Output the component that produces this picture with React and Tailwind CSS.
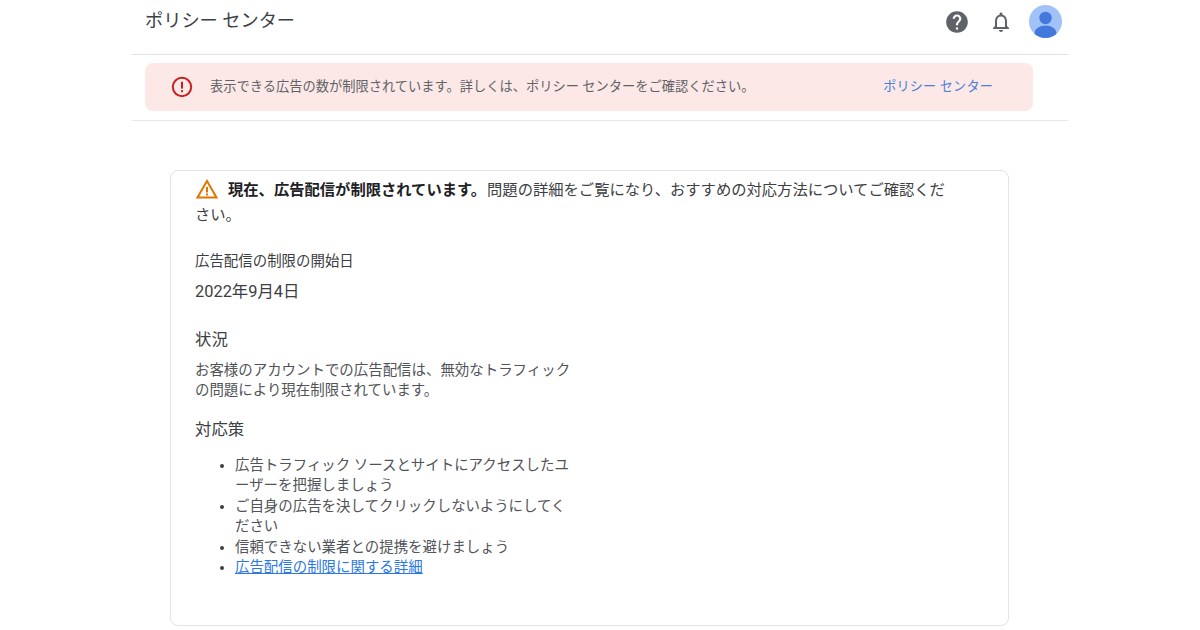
import React from "react";

function App() {
  return (
    <div className="w-[1200px] h-[630px] overflow-hidden bg-white text-[#3c4043] font-['Roboto','Noto_Sans_CJK_JP',sans-serif]">
      <div className="mx-auto w-[936px]">
        <header className="h-[55px] border-b border-[#e2e3e8] flex items-start justify-between pl-[13px] pr-[6px]">
          <h1 className="text-[18.2px] leading-[24px] mt-[9px] font-normal text-[#3c4043]">ポリシー センター</h1>
          <div className="flex items-center mt-[5px]">
            <svg width="26" height="26" viewBox="0 0 24 24" className="mr-[19px]">
              <path fill="#5f6368" d="M12 2C6.48 2 2 6.48 2 12s4.48 10 10 10 10-4.48 10-10S17.52 2 12 2zm1 17h-2v-2h2v2zm2.07-7.75l-.9.92C13.45 12.9 13 13.5 13 15h-2v-.5c0-1.1.45-2.1 1.17-2.83l1.24-1.26c.37-.36.59-.86.59-1.41 0-1.1-.9-2-2-2s-2 .9-2 2H8c0-2.21 1.79-4 4-4s4 1.79 4 4c0 .88-.36 1.68-.93 2.25z" />
            </svg>
            <svg width="24" height="24" viewBox="0 0 24 24" className="mr-[16px]">
              <path fill="#5f6368" d="M12 22c1.1 0 2-.9 2-2h-4c0 1.1.9 2 2 2zm6-6v-5c0-3.07-1.63-5.64-4.5-6.32V4c0-.83-.67-1.5-1.5-1.5s-1.5.67-1.5 1.5v.68C7.64 5.36 6 7.92 6 11v5l-2 2v1h16v-1l-2-2zm-2 1H8v-6c0-2.48 1.51-4.5 4-4.5s4 2.02 4 4.5v6z" />
            </svg>
            <svg width="33" height="33" viewBox="0 0 33 33">
              <defs>
                <clipPath id="avatar"><circle cx="16.5" cy="16.5" r="16.5" /></clipPath>
              </defs>
              <g clipPath="url(#avatar)">
                <rect width="33" height="33" fill="#a0c2f9" />
                <circle cx="16.5" cy="13" r="6.2" fill="#4378dc" />
                <ellipse cx="16.5" cy="28" rx="11" ry="7.5" fill="#4378dc" />
              </g>
            </svg>
          </div>
        </header>

        <div className="pt-[8px] pb-[9px] pl-[13px] pr-[35px] border-b border-[#e8e9ec]">
          <div className="h-[48px] rounded-[8px] bg-[#fce8e6] flex items-center pl-[25px] pr-[40px]">
            <svg width="24" height="24" viewBox="0 0 24 24" className="shrink-0 mr-[16px]">
              <circle cx="12" cy="12" r="9.2" fill="none" stroke="#c5221f" strokeWidth="2" />
              <rect x="11" y="6.8" width="2" height="6.8" fill="#c5221f" />
              <rect x="11" y="15.2" width="2" height="2" fill="#c5221f" />
            </svg>
            <p className="flex-1 text-[13.25px] leading-[20px] text-[#5f6368] -mt-[1px]">表示できる広告の数が制限されています。詳しくは、ポリシー センターをご確認ください。</p>
            <a className="text-[13.1px] leading-[20px] tracking-[0.2px] text-[#4a80d8]">ポリシー センター</a>
          </div>
        </div>

        <main className="mt-[49px] ml-[38px] w-[839px] h-[456px] rounded-[8px] border border-[#e2e3e8] pl-[24px] pt-[6px]">
          <p className="w-[755px] text-[15.3px] leading-[25px] text-[#3c4043]">
            <svg width="24" height="24" viewBox="0 0 24 24" className="inline-block align-[-6px] mr-[9px]">
              <path fill="none" stroke="#e37400" strokeWidth="2" strokeLinejoin="miter" d="M12 4 L21.5 20.5 H2.5 Z" />
              <rect x="11" y="10" width="2" height="5.5" fill="#e37400" />
              <rect x="11" y="16.5" width="2" height="2" fill="#e37400" />
            </svg>
            <strong className="font-bold text-[#202124] mr-[1px]">現在、広告配信が制限されています。</strong><span>問題の詳細をご覧になり、おすすめの対応方法についてご確認ください。</span>
          </p>
          <p className="mt-[22px] text-[14.45px] leading-[24px]">広告配信の制限の開始日</p>
          <p className="mt-[6px] text-[16.4px] leading-[24px]">2022年9月4日</p>
          <h2 className="mt-[24px] text-[16.4px] leading-[24px] font-normal">状況</h2>
          <p className="mt-[9px] w-[380px] text-[14.45px] leading-[20.4px] text-[#505357]">お客様のアカウントでの広告配信は、無効なトラフィックの問題により現在制限されています。</p>
          <h2 className="mt-[16px] text-[16.4px] leading-[24px] font-normal">対応策</h2>
          <ul className="mt-[14px] w-[376px] pl-[40px] list-disc marker:text-[#3c4043] text-[14.45px] leading-[20.5px] text-[#505357]">
            <li>広告トラフィック ソースとサイトにアクセスしたユーザーを把握しましょう</li>
            <li>ご自身の広告を決してクリックしないようにしてください</li>
            <li>信頼できない業者との提携を避けましょう</li>
            <li><a className="underline text-[#2b78e4]">広告配信の制限に関する詳細</a></li>
          </ul>
        </main>
      </div>
    </div>
  );
}

export default App;
